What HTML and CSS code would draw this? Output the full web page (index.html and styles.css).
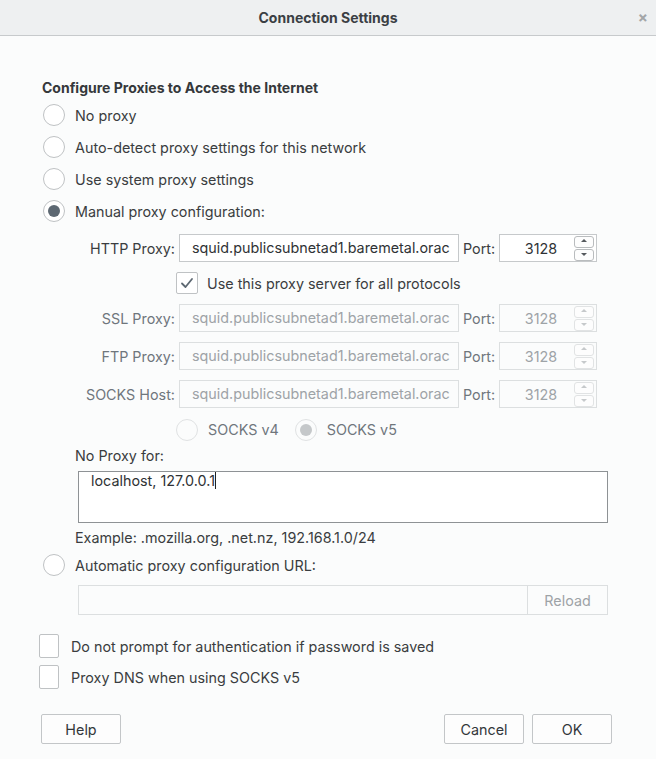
FILE: index.html
```html
<!DOCTYPE html>
<html>
<head>
<meta charset="utf-8">
<link rel="stylesheet" href="styles.css">
</head>
<body>
<div class="dialog">
  <div class="titlebar">
    <span class="title">Connection Settings</span>
    <span class="close">×</span>
  </div>
  <div class="content">
    <div class="heading">Configure Proxies to Access the Internet</div>
    <div class="radio-row"><span class="radio"></span><span>No proxy</span></div>
    <div class="radio-row"><span class="radio"></span><span>Auto-detect proxy settings for this network</span></div>
    <div class="radio-row"><span class="radio"></span><span>Use system proxy settings</span></div>
    <div class="radio-row"><span class="radio checked"></span><span>Manual proxy configuration:</span></div>

    <div class="manual">
      <div class="proxy-grid">
        <label class="plabel">HTTP Proxy:</label>
        <div class="field">squid.publicsubnetad1.baremetal.orac</div>
        <label class="portlabel">Port:</label>
        <div class="port"><span class="portval">3128</span><span class="spin"><i class="up"></i><i class="down"></i></span></div>

        <div class="share">
          <span class="check checked"><svg width="14" height="12" viewBox="0 0 14 12"><path d="M2 6.5 L5.5 10 L12 2" fill="none" stroke="#5d6872" stroke-width="1.8" stroke-linecap="round" stroke-linejoin="round"/></svg></span>
          <span>Use this proxy server for all protocols</span>
        </div>

        <label class="plabel dis">SSL Proxy:</label>
        <div class="field dis">squid.publicsubnetad1.baremetal.orac</div>
        <label class="portlabel dis">Port:</label>
        <div class="port dis"><span class="portval">3128</span><span class="spin"><i class="up"></i><i class="down"></i></span></div>

        <label class="plabel dis">FTP Proxy:</label>
        <div class="field dis">squid.publicsubnetad1.baremetal.orac</div>
        <label class="portlabel dis">Port:</label>
        <div class="port dis"><span class="portval">3128</span><span class="spin"><i class="up"></i><i class="down"></i></span></div>

        <label class="plabel dis">SOCKS Host:</label>
        <div class="field dis">squid.publicsubnetad1.baremetal.orac</div>
        <label class="portlabel dis">Port:</label>
        <div class="port dis"><span class="portval">3128</span><span class="spin"><i class="up"></i><i class="down"></i></span></div>

        <div class="socks">
          <span class="radio dis"></span><span class="dtext">SOCKS v4</span>
          <span class="radio dis checked-dis"></span><span class="dtext">SOCKS v5</span>
        </div>
      </div>

      <div class="noproxy-label">No Proxy for:</div>
      <div class="textarea"><span class="tatext">localhost, 127.0.0.1</span><span class="caret"></span></div>
      <div class="example">Example: .mozilla.org, .net.nz, 192.168.1.0/24</div>
    </div>

    <div class="radio-row auto"><span class="radio"></span><span>Automatic proxy configuration URL:</span></div>
    <div class="url-row">
      <div class="url-field"></div>
      <div class="reload">Reload</div>
    </div>

    <div class="check-row first"><span class="check"></span><span>Do not prompt for authentication if password is saved</span></div>
    <div class="check-row"><span class="check"></span><span>Proxy DNS when using SOCKS v5</span></div>

    <div class="buttons">
      <div class="btn">Help</div>
      <div class="spacer"></div>
      <div class="btn">Cancel</div>
      <div class="btn">OK</div>
    </div>
  </div>
</div>
</body>
</html>
```
FILE: styles.css
```css
html, body {
  margin: 0;
  padding: 0;
  background: #fbfcfc;
}
body {
  font-family: Inter, "Liberation Sans", Arial, sans-serif;
  font-size: 14.35px;
  color: #3a3d40;
  width: 656px;
  height: 759px;
  overflow: hidden;
}
.dialog {
  width: 656px;
  height: 759px;
  display: flex;
  flex-direction: column;
}
.titlebar {
  flex: none;
  height: 35px;
  background: #eef0f1;
  border-bottom: 1px solid #c7cacc;
  display: flex;
  align-items: center;
  justify-content: center;
  position: relative;
}
.title {
  font-weight: bold;
  font-size: 14px;
  color: #3b3f44;
}
.close {
  position: absolute;
  right: 8px;
  top: 8px;
  color: #a3a6a8;
  font-size: 15px;
  font-weight: bold;
}
.content {
  flex: none;
  padding: 42px 44px 0 42px;
  display: flex;
  flex-direction: column;
}
.heading {
  font-weight: bold;
  font-size: 14px;
  height: 20px;
  line-height: 20px;
  margin-bottom: 1px;
  color: #35383b;
}
.radio-row {
  height: 32px;
  display: flex;
  align-items: center;
  gap: 10px;
  margin-left: 1px;
}
.radio {
  width: 22px;
  height: 22px;
  border-radius: 50%;
  border: 1px solid #bfc2c4;
  background: #ffffff;
  box-sizing: border-box;
  display: inline-flex;
  align-items: center;
  justify-content: center;
  flex: none;
}
.radio.checked::after {
  content: "";
  width: 12px;
  height: 12px;
  border-radius: 50%;
  background: #5d6872;
}
.radio.dis {
  border-color: #e0e2e3;
  background: #fbfcfc;
}
.radio.checked-dis::after {
  content: "";
  width: 12px;
  height: 12px;
  border-radius: 50%;
  background: #c5c8ca;
}
.manual {
  padding-left: 33px;
  display: flex;
  flex-direction: column;
}
.proxy-grid {
  margin-top: 7px;
  display: grid;
  grid-template-columns: 100px 280px 32px 98px;
  grid-template-rows: 28px 22px 28px 28px 28px 22px;
  column-gap: 4px;
  row-gap: 10px;
  align-items: center;
}
.plabel {
  text-align: right;
  color: #3a3d40;
}
.plabel.dis, .portlabel.dis {
  color: #6f767c;
}
.portlabel {
  color: #3a3d40;
}
.field {
  height: 28px;
  box-sizing: border-box;
  border: 1px solid #c6c9cb;
  background: #ffffff;
  padding: 0 0 0 12px;
  line-height: 26px;
  white-space: nowrap;
  overflow: hidden;
  color: #2f3235;
}
.field.dis {
  border-color: #dcdfe0;
  background: #fbfcfc;
  color: #9ea3a7;
}
.port {
  height: 28px;
  box-sizing: border-box;
  border: 1px solid #c6c9cb;
  background: #ffffff;
  display: flex;
  align-items: center;
  color: #2f3235;
}
.port.dis {
  border-color: #dcdfe0;
  background: #fbfcfc;
  color: #9ea3a7;
}
.portval {
  flex: 1;
  text-align: center;
  padding-left: 8px;
}
.spin {
  width: 20px;
  margin-right: 2px;
  display: flex;
  flex-direction: column;
  gap: 1px;
}
.spin i {
  display: block;
  height: 10px;
  border: 1px solid #b9bcbe;
  border-radius: 3px;
  position: relative;
  background: #fdfdfd;
}
.spin i::after {
  content: "";
  position: absolute;
  left: 6px;
  width: 0;
  height: 0;
  border-left: 3px solid transparent;
  border-right: 3px solid transparent;
}
.spin .up::after {
  top: 2px;
  border-bottom: 3px solid #55595d;
}
.spin .down::after {
  top: 3px;
  border-top: 3px solid #55595d;
}
.port.dis .spin i {
  border-color: #e1e3e4;
}
.port.dis .spin .up::after {
  border-bottom-color: #c6c9cb;
}
.port.dis .spin .down::after {
  border-top-color: #c6c9cb;
}
.share {
  grid-column: 2 / 5;
  height: 22px;
  display: flex;
  align-items: center;
  gap: 9px;
  margin-left: -3px;
}
.check {
  width: 22px;
  height: 22px;
  box-sizing: border-box;
  border: 1px solid #bfc2c4;
  border-radius: 2px;
  background: #ffffff;
  display: inline-flex;
  align-items: center;
  justify-content: center;
  flex: none;
}
.socks {
  grid-column: 2 / 5;
  display: flex;
  align-items: center;
  margin-left: -3px;
  margin-top: 1px;
}
.socks .radio {
  margin-right: 10px;
}
.socks .dtext {
  color: #6f767c;
  margin-right: 16px;
}
.noproxy-label {
  margin-top: 7px;
  height: 18px;
  line-height: 18px;
}
.textarea {
  margin-top: 6px;
  margin-left: 3px;
  width: 530px;
  height: 52px;
  box-sizing: border-box;
  border: 1px solid #8e9295;
  background: #ffffff;
  display: flex;
  align-items: flex-start;
  color: #2f3235;
}
.tatext {
  margin-left: 12px;
  margin-top: 1px;
  line-height: 16px;
}
.caret {
  display: block;
  width: 1px;
  height: 17px;
  margin-top: 0;
  background: #222;
}
.example {
  margin-top: 6px;
  height: 18px;
  line-height: 18px;
}
.radio-row.auto {
  margin-top: 2px;
  height: 32px;
}
.url-row {
  margin-top: 4px;
  margin-left: 36px;
  width: 530px;
  height: 30px;
  box-sizing: border-box;
  border: 1px solid #dcdfe0;
  display: flex;
}
.url-field {
  flex: 1;
}
.reload {
  width: 79px;
  border-left: 1px solid #dcdfe0;
  display: flex;
  align-items: center;
  justify-content: center;
  color: #9ea3a7;
}
.check-row {
  display: flex;
  align-items: center;
  gap: 12px;
  height: 24px;
  margin-left: -3px;
}
.check-row .check {
  width: 20px;
  height: 24px;
}
.check-row.first {
  margin-top: 19px;
  margin-bottom: 7px;
}
.buttons {
  margin-top: 25px;
  display: flex;
  gap: 8px;
  margin-left: -1px;
  width: 571px;
}
.spacer { flex: 1; }
.btn {
  width: 80px;
  height: 30px;
  box-sizing: border-box;
  border: 1px solid #c3c6c8;
  border-radius: 2px;
  background: #fdfdfd;
  display: flex;
  align-items: center;
  justify-content: center;
  color: #33373a;
}
```
